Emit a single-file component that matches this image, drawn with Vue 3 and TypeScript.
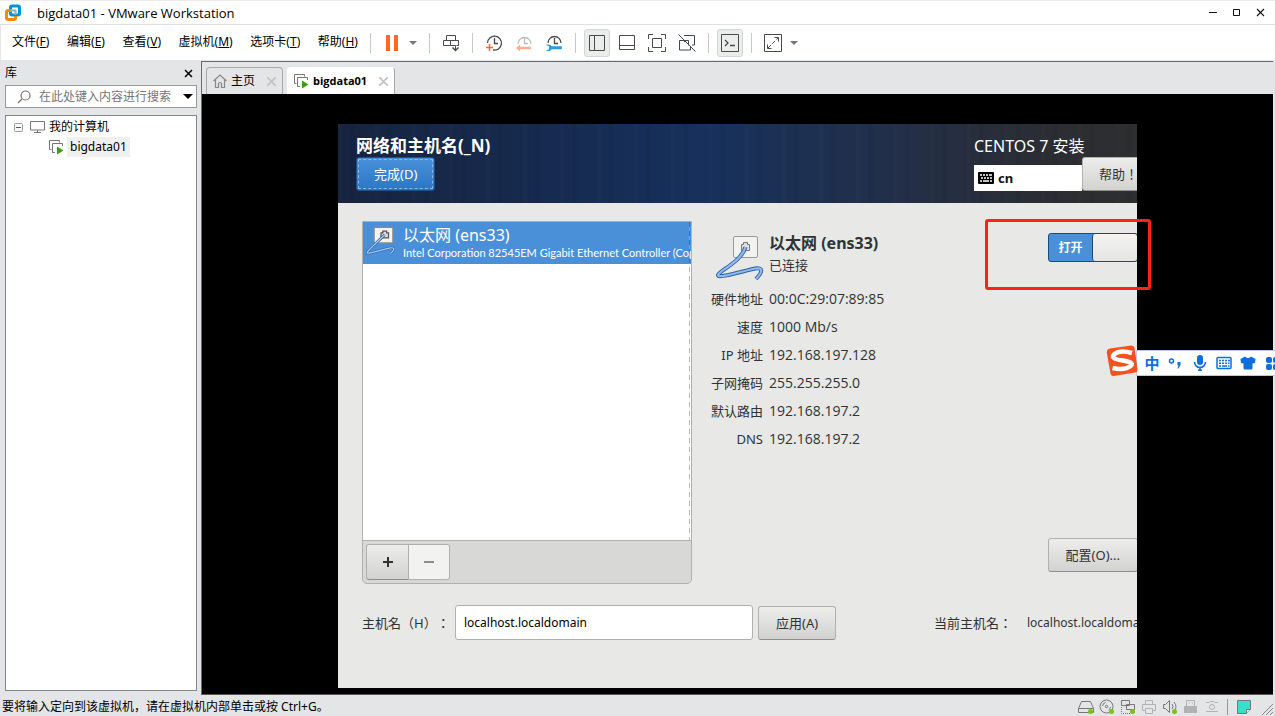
<script setup lang="ts">
import { ref } from 'vue'

interface MenuItem { label: string; key: string }
interface DetailRow { label: string; value: string }

const menus: MenuItem[] = [
  { label: '文件', key: 'F' },
  { label: '编辑', key: 'E' },
  { label: '查看', key: 'V' },
  { label: '虚拟机', key: 'M' },
  { label: '选项卡', key: 'T' },
  { label: '帮助', key: 'H' },
]

const details: DetailRow[] = [
  { label: '硬件地址', value: '00:0C:29:07:89:85' },
  { label: '速度', value: '1000 Mb/s' },
  { label: 'IP 地址', value: '192.168.197.128' },
  { label: '子网掩码', value: '255.255.255.0' },
  { label: '默认路由', value: '192.168.197.2' },
  { label: 'DNS', value: '192.168.197.2' },
]

const search = ref('')
const hostname = ref('localhost.localdomain')
const connected = ref(true)
</script>

<template>
  <div class="window">
    <header class="titlebar">
      <svg class="logo" width="18" height="18" viewBox="0 0 18 18" fill="none" stroke-width="3">
        <rect x="6.500" y="2" width="9" height="9" rx="1.500" stroke="#0095d3" />
        <path d="M8 6.500H4a1.500 1.500 0 0 0-1.500 1.500v6A1.500 1.500 0 0 0 4 15.500h6a1.500 1.500 0 0 0 1.500-1.500v-2" stroke="#f38b00" />
        <path d="M6.500 6.500h5v4.500" stroke="#7fb7c9" stroke-width="2" />
      </svg>
      <h1>bigdata01 - VMware Workstation</h1>
      <div class="win-controls">
        <button type="button" aria-label="最小化"><svg width="10" height="10" viewBox="0 0 10 10"><path d="M1 4.500h8" stroke="#111" /></svg></button>
        <button type="button" aria-label="最大化"><svg width="10" height="10" viewBox="0 0 10 10"><path d="M1.500 1.500h6v6h-6z" fill="none" stroke="#111" /></svg></button>
        <button type="button" aria-label="关闭"><svg width="10" height="10" viewBox="0 0 10 10"><path d="M1 1l7 7M8 1L1 8" stroke="#111" stroke-width="1.100" /></svg></button>
      </div>
    </header>

    <div class="menubar">
      <nav class="menus">
        <button v-for="m in menus" :key="m.key" type="button">{{ m.label }}(<u>{{ m.key }}</u>)</button>
      </nav>
      <span class="sep"></span>
      <button class="tool" type="button" aria-label="挂起"><svg width="18" height="18" viewBox="0 0 18 18"><path d="M3 1h4v16H3zM11 1h4v16h-4z" fill="#ff6a1f" /></svg></button>
      <button class="caret" type="button" aria-label="电源选项"><svg width="8" height="4" viewBox="0 0 8 4"><path d="M0 0h8L4 4z" fill="#777" /></svg></button>
      <span class="sep"></span>
      <button class="tool" type="button" aria-label="发送按键"><svg width="18" height="18" viewBox="0 0 18 18" fill="none" stroke="#4a4a4a"><path d="M4.500 6.500v-5h9v5M8.500 11.500h-7v-5h15v5h-2M4.500 6.500h9M8.500 6.500v5h5v5" /><path d="M10.500 13.500l3 3 3-3" stroke-width="1.500" /></svg></button>
      <span class="sep"></span>
      <div class="tools">
        <button class="tool" type="button" aria-label="拍摄快照"><svg width="18" height="18" viewBox="0 0 18 18" fill="none"><path d="M2.500 9a7 7 0 1 1 5.500 7M9.500 4v5.500H13" stroke="#4a4a4a" stroke-width="1.300" /><path d="M1 13.500h7M4.500 10v7" stroke="#ff6a1f" stroke-width="1.500" /></svg></button>
        <button class="tool" type="button" aria-label="恢复快照"><svg width="18" height="18" viewBox="0 0 18 18" fill="none"><path d="M3 10a6.500 6.500 0 1 1 13 0M9.500 4v5.500H13" stroke="#bbb" stroke-width="1.300" /><path d="M1 14l4-3.500v2.200h11v2.600H5v2.200z" fill="#ffb08a" /></svg></button>
        <button class="tool" type="button" aria-label="管理快照"><svg width="18" height="18" viewBox="0 0 18 18" fill="none"><path d="M3 9a6.500 6.500 0 1 1 13 0M9.500 4v5.500H13" stroke="#4a4a4a" stroke-width="1.300" /><path d="M1 11c3-1 5 0 5.500 1.200H16q1 0 1 1.500T16 15.200H6.500C6 17 3 17.500 1 16.500l3-1.200v-3z" fill="#2a9be0" /></svg></button>
      </div>
      <span class="sep"></span>
      <div class="tools">
        <button class="tool active" type="button" aria-label="显示库"><svg width="18" height="18" viewBox="0 0 18 18" fill="none" stroke="#4a4a4a"><path d="M1.500 1.500h15v15h-15zM6.500 1.500v15" /></svg></button>
        <button class="tool" type="button" aria-label="缩略图栏"><svg width="18" height="18" viewBox="0 0 18 18" fill="none" stroke="#4a4a4a"><path d="M1.500 1.500h15v14h-15zM1.500 11.500h15" /></svg></button>
        <button class="tool" type="button" aria-label="全屏"><svg width="18" height="18" viewBox="0 0 18 18" fill="none" stroke="#4a4a4a"><path d="M.5 5V.5H5M13 .5h4.500V5M17.500 13v4.500H13M5 17.500H.5V13M4.500 4.500h9v9h-9z" /></svg></button>
        <button class="tool" type="button" aria-label="Unity"><svg width="18" height="18" viewBox="0 0 18 18" fill="none" stroke="#3c4a52"><path d="M6 1.500h10.500v9.500H14M6.500 8V6.500h4v5M7 6.500H1.500v9.500h11v-3M.5.5l17 17" /></svg></button>
      </div>
      <span class="sep"></span>
      <button class="tool active" type="button" aria-label="控制台视图"><svg width="18" height="18" viewBox="0 0 18 18" fill="none" stroke="#4a4a4a"><path d="M.5.5h17v17H.5z" /><path d="M4 6l3 3-3 3M9 11.500h5" stroke-width="1.300" /></svg></button>
      <span class="sep"></span>
      <button class="tool" type="button" aria-label="自由拉伸"><svg width="18" height="18" viewBox="0 0 18 18" fill="none" stroke="#4a4a4a"><path d="M.5.5h17v17H.5zM10.500 3.500h4v4M3.500 10.500v4h4" /><path d="M4 14L14 4" stroke-dasharray="4 2" /></svg></button>
      <button class="caret" type="button" aria-label="拉伸选项"><svg width="8" height="4" viewBox="0 0 8 4"><path d="M0 0h8L4 4z" fill="#777" /></svg></button>
    </div>

    <div class="workspace">
      <aside class="library">
        <div class="lib-head">
          <h2>库</h2>
          <button type="button" aria-label="关闭库"><svg width="9" height="9" viewBox="0 0 9 9"><path d="M1 1l7 7M8 1L1 8" stroke="#000" stroke-width="1.500" /></svg></button>
        </div>
        <div class="search">
          <svg width="14" height="14" viewBox="0 0 14 14" fill="none" stroke="#777" stroke-width="1.200"><circle cx="8.500" cy="5.500" r="4.500" /><path d="M5 9l-4 4" /></svg>
          <input v-model="search" type="text" aria-label="搜索" placeholder="在此处键入内容进行搜索" />
          <button type="button" aria-label="搜索选项"><svg width="10" height="5" viewBox="0 0 10 5"><path d="M0 0h10L5 5z" /></svg></button>
        </div>
        <div class="tree">
          <div class="node">
            <svg width="9" height="9" viewBox="0 0 9 9"><rect x=".5" y=".5" width="8" height="8" rx="1" fill="#f8f8f8" stroke="#999" /><path d="M2 4.500h5" stroke="#3b57a5" /></svg>
            <svg class="pc" width="15" height="12" viewBox="0 0 15 12" fill="none" stroke="#777"><path d="M.5.500h14v8.500H.500zM7.500 9v2M4 11.500h7" /></svg>
            <button type="button">我的计算机</button>
          </div>
          <div class="node child">
            <svg width="15" height="15" viewBox="0 0 15 15" fill="none" stroke="#777"><path d="M2.500 9.500h-2v-9h10v2M6 12.500H3.500v-9h10V6" /><path d="M8 6.500l6.500 4-6.500 4z" fill="#3f9c14" stroke="none" /></svg>
            <button class="current" type="button">bigdata01</button>
          </div>
        </div>
      </aside>

      <main class="console">
        <div class="tabs">
          <div class="tab">
            <svg width="14" height="14" viewBox="0 0 14 14" fill="none" stroke="#888" stroke-width="1.200"><path d="M.5 7L7 1l6.500 6M2.500 6v7.500h3V9.500q1.500-2 3 0v4h3V6" /></svg>
            <button class="name" type="button">主页</button>
            <button class="close" type="button" aria-label="关闭主页"><svg width="9" height="9" viewBox="0 0 9 9"><path d="M0 0l9 9M9 0L0 9" stroke="#c4c4c4" stroke-width="1.800" /></svg></button>
          </div>
          <div class="tab selected">
            <svg width="15" height="15" viewBox="0 0 15 15" fill="none" stroke="#777"><path d="M2.500 9.500h-2v-9h10v2M6 12.500H3.500v-9h10V6" /><path d="M8 6.500l6.500 4-6.500 4z" fill="#3f9c14" stroke="none" /></svg>
            <button class="name" type="button">bigdata01</button>
            <button class="close" type="button" aria-label="关闭 bigdata01"><svg width="9" height="9" viewBox="0 0 9 9"><path d="M0 0l9 9M9 0L0 9" stroke="#c4c4c4" stroke-width="1.800" /></svg></button>
          </div>
        </div>

        <div class="screen">
          <section class="guest">
            <div class="guest-inner">
              <div class="banner">
                <div class="banner-left">
                  <h2>网络和主机名(_N)</h2>
                  <button class="done" type="button">完成(D)</button>
                </div>
                <div class="banner-right">
                  <p>CENTOS 7 安装</p>
                  <div class="banner-tools">
                    <button class="layout" type="button">
                      <svg width="16" height="12" viewBox="0 0 16 12"><rect width="16" height="12" rx="1" /><path d="M2 3h2M5 3h2M8 3h2M11 3h3M3 6h2M6 6h2M9 6h2M12 6h2M2 9h2M5 9h6M12 9h2" stroke="#fff" stroke-width="1.600" /></svg>
                      cn
                    </button>
                    <button class="gtk help centered-marks" type="button">帮助！</button>
                  </div>
                </div>
              </div>

              <div class="net">
                <div class="devices">
                  <div class="device-list">
                    <button class="device" type="button">
                      <svg width="30" height="30" viewBox="0 0 48 46" fill="none">
                        <rect x="13" y="1" width="30" height="25" rx="1" fill="#f2f2f0" stroke="#8a8a86" stroke-width="2" />
                        <path d="M24 18v-8h3V7h6v3h3v8z" fill="#ddd" stroke="#555" stroke-width="2" />
                        <path d="M30 13C20 23 5 36 2 41S24 37 39 34Q50 33 39 43" stroke="#2f60a5" stroke-width="4" />
                        <path d="M30 13C20 23 5 36 2 41S24 37 39 34Q50 33 39 43" stroke="#a5c8f2" stroke-width="2" />
                      </svg>
                      <span class="device-text">
                        <strong>以太网 (ens33)</strong>
                        <small>Intel Corporation 82545EM Gigabit Ethernet Controller (Copper)</small>
                      </span>
                    </button>
                  </div>
                  <div class="device-tools">
                    <button class="gtk" type="button" aria-label="添加"><svg width="10" height="10" viewBox="0 0 10 10"><path d="M0 5h10M5 0v10" stroke="#2e3436" stroke-width="2" /></svg></button>
                    <button class="gtk" type="button" aria-label="移除" disabled><svg width="10" height="10" viewBox="0 0 10 10"><path d="M0 5h10" stroke="#8b8e8f" stroke-width="2" /></svg></button>
                  </div>
                </div>

                <div class="info">
                  <div class="info-head">
                    <svg width="48" height="46" viewBox="0 0 48 46" fill="none">
                      <rect x="17.500" y=".500" width="24" height="21" rx="1.500" fill="#f2f2f0" stroke="#9a9a96" />
                      <path d="M25.500 14.500v-6h2V6.500h4v2h2v6z" fill="#e0e0de" stroke="#777" />
                      <path d="M29.500 11C26 25 3 35 2 39S24 36 39 32.500Q51 31 40 43" stroke="#2f60a5" stroke-width="4" />
                      <path d="M29.500 11C26 25 3 35 2 39S24 36 39 32.500Q51 31 40 43" stroke="#8fb9ec" stroke-width="2.200" />
                    </svg>
                    <div class="info-title">
                      <h3>以太网 (ens33)</h3>
                      <p>已连接</p>
                    </div>
                    <label class="switch">
                      <input v-model="connected" type="checkbox" role="switch" />
                      <span class="on">打开</span>
                      <span class="knob"></span>
                    </label>
                  </div>
                  <dl>
                    <template v-for="row in details" :key="row.label">
                      <dt>{{ row.label }}</dt>
                      <dd>{{ row.value }}</dd>
                    </template>
                  </dl>
                  <button class="gtk configure" type="button">配置(O)...</button>
                </div>
              </div>

              <div class="host">
                <label class="centered-marks" for="hostname">主机名（H）：</label>
                <input id="hostname" v-model="hostname" type="text" />
                <button class="gtk apply" type="button">应用(A)</button>
                <p class="host-now"><span class="centered-marks">当前主机名：</span><span class="host-value">localhost.localdomain</span></p>
              </div>
            </div>
          </section>
        </div>
      </main>
    </div>

    <footer class="status">
      <p>要将输入定向到该虚拟机，请在虚拟机内部单击或按 Ctrl+G。</p>
      <div class="devices-bar">
        <svg viewBox="0 0 16 16" fill="none" stroke="#777"><path d="M3.500 2.500h9l3 7v4H.5v-4zM.5 9.500h15" /><circle cx="12.500" cy="12.500" r="2.500" fill="#7ac21a" stroke="none" /></svg>
        <svg viewBox="0 0 16 16" fill="none" stroke="#777"><circle cx="7.500" cy="7.500" r="6.500" /><circle cx="7.500" cy="7.500" r="1.200" /><path d="M3.500 7a4 4 0 0 1 3-3.500M11.500 8a4 4 0 0 1-2 3" /><circle cx="12.500" cy="12.500" r="2.500" fill="#7ac21a" stroke="none" /></svg>
        <svg viewBox="0 0 16 16" fill="none" stroke="#777"><path d="M1.500 1.500h8v5h-8zM6.500 5.500h8v5h-8z" fill="#e4e5e7" /><path d="M1.500 8v6.500H11" stroke-dasharray="1 1" /><circle cx="12.500" cy="12.500" r="2.500" fill="#7ac21a" stroke="none" /></svg>
        <svg viewBox="0 0 16 16" fill="none" stroke="#b2b2b2"><path d="M4.500 5.500v-4h7v4M4.500 11.500h-3v-6h13v6h-3M4.500 9.500h7v5h-7z" /></svg>
        <svg viewBox="0 0 16 16" fill="none" stroke="#777"><path d="M1.500 5.500h2l4-4v12l-4-4h-2zM10 5q2 2.500 0 5M12 3q4 5 0 9" /><circle cx="12.500" cy="12.500" r="2.500" fill="#7ac21a" stroke="none" /></svg>
        <svg viewBox="0 0 16 16" fill="none" stroke="#b2b2b2"><path d="M3.500 7V1.500h8V7" /><path d="M6 4h1M9 4h1" /><path d="M1 7h13v7H1z" fill="#b2b2b2" stroke="none" /></svg>
        <svg viewBox="0 0 16 16" fill="none" stroke="#b2b2b2"><path d="M2 3.500h3l1-1h4l1 1h3M2 12.500h12" /><circle cx="8" cy="8" r="2.500" /></svg>
        <span class="divider"></span>
        <svg viewBox="0 0 16 16"><path d="M1.500 1.500h13v9l-4 4h-9z" fill="#38dfca" stroke="#777" /><path d="M10.500 14.500v-4h4" fill="#d7f5f0" stroke="#777" /></svg>
        <svg class="grip" viewBox="0 0 12 12" fill="none" stroke="#888"><path d="M1 12L12 1M5 12l7-7M9 12l3-3" /></svg>
      </div>
    </footer>

    <div class="highlight"></div>

    <div class="ime">
      <svg class="sogou" width="32" height="32" viewBox="0 0 32 32">
        <path d="M4 3.500L25 .5q3-.3 3.500 2.500L31.500 24q.2 3-2.500 3.500L8 31q-3 .3-3.500-2.500L.8 7.500Q.8 4 4 3.500z" fill="#f4511e" />
        <path d="M26 8Q14 4.500 8.500 9T16.500 15.500T24 21.500T6.500 23" fill="none" stroke="#fff" stroke-width="4.500" />
      </svg>
      <div class="ime-bar">
        <button type="button" class="lang">中</button>
        <button type="button" aria-label="标点"><svg width="16" height="16" viewBox="0 0 16 16"><circle cx="3.500" cy="6" r="2" fill="none" stroke="#0b6fdc" stroke-width="1.500" /><path d="M9.500 7h3v3l-2 3.500H9.500l1-3h-1z" fill="#0b6fdc" /></svg></button>
        <button type="button" aria-label="语音"><svg width="16" height="16" viewBox="0 0 16 16" fill="none" stroke="#0b6fdc" stroke-width="1.600"><rect x="5" y="0" width="6" height="10" rx="3" fill="#0b6fdc" stroke="none" /><path d="M2.500 7a5.500 5.500 0 0 0 11 0M8 12.500V16M6 15.300h4" /></svg></button>
        <button type="button" aria-label="软键盘"><svg width="16" height="16" viewBox="0 0 16 16" fill="none" stroke="#0b6fdc" stroke-width="1.500"><rect x="1" y="2.500" width="14" height="11" rx="1" /><path d="M3 5.500h2M6 5.500h2M9 5.500h2M12 5.500h2M3 8.200h2M6 8.200h2M9 8.200h2M12 8.200h1.500M3 11h2M6 11h5M12 11h1.500" /></svg></button>
        <button type="button" aria-label="皮肤"><svg width="16" height="16" viewBox="0 0 16 16"><path d="M5 1.500q3 3 6 0l4.500 2.500-.5 4-2.500.5V13q0 1.500-1.500 1.500H5Q3.500 14.500 3.500 13V8.500L1 8 .5 4z" fill="#0b6fdc" /></svg></button>
        <button type="button" aria-label="工具箱"><svg width="16" height="16" viewBox="0 0 16 16" fill="#0b6fdc"><rect x="2" y="2" width="6" height="6" rx="2" /><rect x="9" y="2" width="6" height="6" rx="2" /><rect x="2" y="9" width="6" height="6" rx="2" /><rect x="9" y="9" width="6" height="6" rx="2" /></svg></button>
      </div>
    </div>
  </div>
</template>

<style>
html,
body {
  margin: 0;
  background: #e4e5e7;
}
</style>

<style scoped>
* {
  box-sizing: border-box;
}

h1,
h2,
h3,
p,
dl,
dd {
  margin: 0;
  font: inherit;
}

button,
input {
  margin: 0;
  padding: 0;
  border: 0;
  background: none;
  color: inherit;
  font: inherit;
}

svg {
  display: block;
  flex: none;
}

.window {
  position: relative;
  display: flex;
  flex-direction: column;
  height: 100vh;
  min-height: 560px;
  overflow: hidden;
  background: #e4e5e7;
  color: #000;
  font: 12px/16px "Noto Sans", "Noto Sans CJK SC", sans-serif;
  white-space: nowrap;
}

.titlebar {
  display: flex;
  align-items: center;
  height: 25px;
  padding: 0 9px 0 4px;
  border-top: 1px solid #ececec;
  border-bottom: 1px solid #e0e0e0;
  background: #fff;
}

.titlebar h1 {
  flex: 1;
  margin-left: 15px;
  font-family: "Open Sans", "Noto Sans", sans-serif;
  font-size: 13px;
}

.win-controls {
  display: flex;
  gap: 14px;
}

.win-controls button {
  width: 10px;
  height: 10px;
}

.menubar {
  display: flex;
  align-items: center;
  height: 35px;
  margin: 0 0 1px 1px;
  background: #fff;
}

.menus {
  display: flex;
  justify-content: space-between;
  width: 357px;
  margin-right: 4px;
  padding-left: 11px;
}

.menus button {
  padding-bottom: 2px;
}

.sep {
  width: 1px;
  height: 20px;
  margin: 0 8px;
  background: #c8c8c8;
}

.tools {
  display: flex;
  gap: 4px;
}

.tool {
  display: grid;
  place-content: center;
  width: 26px;
  height: 28px;
  border-radius: 3px;
}

.tool.active {
  border: 1px solid #d4d6d6;
  background: #ebecec;
}

.caret {
  display: grid;
  place-content: center;
  width: 16px;
  height: 28px;
}

.workspace {
  display: flex;
  flex: 1;
  min-height: 0;
}

.library {
  display: flex;
  flex-direction: column;
  width: 201px;
  padding: 0 4px 4px 5px;
}

.lib-head {
  display: flex;
  align-items: center;
  justify-content: space-between;
  height: 24px;
  padding-right: 4px;
}

.search {
  display: flex;
  align-items: center;
  height: 23px;
  margin-bottom: 7px;
  padding: 0 3px 0 11px;
  border: 1px solid #98989c;
  background: #fff;
}

.search input {
  flex: 1;
  min-width: 0;
  margin-left: 8px;
  outline: 0;
}

.search input::placeholder {
  color: #757575;
  opacity: 1;
}

.tree {
  flex: 1;
  padding: 1px 0 0 8px;
  border: 1px solid #828790;
  background: #fff;
}

.node {
  display: flex;
  align-items: center;
  height: 20px;
}

.node .pc {
  margin: 0 4px 0 7px;
}

.child {
  padding-left: 35px;
}

.child button {
  height: 20px;
  margin-left: 3px;
  padding: 0 3px;
  background: #f0f0f0;
}

.console {
  display: flex;
  flex: 1;
  flex-direction: column;
  min-width: 0;
  margin-right: 2px;
  border-top: 1px solid #6a6a6c;
  border-bottom: 1px solid #5e5558;
  border-left: 1px solid #6a6a6c;
}

.tabs {
  display: flex;
  gap: 4px;
  padding: 5px 0 0 4px;
}

.tab {
  display: flex;
  align-items: center;
  height: 27px;
  padding: 0 6px;
  border: 1px solid #a8a8aa;
  border-bottom: 0;
  border-radius: 4px 4px 0 0;
}

.tab .name {
  margin: 0 12px 0 4px;
}

.tab.selected {
  border-color: #fff #a8a8aa #fff #fff;
  background: #fff;
}

.selected .name {
  font-family: "Open Sans", "Noto Sans", sans-serif;
  font-size: 11px;
  font-weight: 700;
}

.screen {
  display: flex;
  flex: 1;
  min-height: 0;
  padding: 30px 136px 6px;
  background: #000;
}

.guest {
  display: flex;
  flex: 1;
  min-width: 0;
  overflow: hidden;
  background: #e8e8e6;
  color: #2e3436;
  font-size: 13px;
}

.guest-inner {
  display: flex;
  flex: none;
  flex-direction: column;
  width: calc(100% + 25px);
}

.centered-marks {
  font-family: "Noto Sans", "Noto Sans CJK TC", sans-serif;
  text-spacing-trim: space-all;
}

.banner {
  display: flex;
  justify-content: space-between;
  height: 79px;
  padding: 11px 7px 0 18px;
  background:
    repeating-linear-gradient(90deg, rgba(255, 255, 255, 0.01) 0 3px, transparent 5px 11px, rgba(0, 0, 0, 0.05) 13px 15px, transparent 18px 37px),
    linear-gradient(90deg, #172440 0%, #162c53 30%, #17315c 45%, #222f48 68%, #2a2d33 85%, #2e2e2e 100%);
  color: #fff;
}

.banner h2 {
  font-size: 17px;
  font-weight: 700;
  line-height: 22px;
}

.banner p {
  font-size: 16px;
  line-height: 22px;
}

.done {
  height: 34px;
  padding: 0 17px;
  border: 1px solid #1c5187;
  border-radius: 3px;
  outline: 1px dashed #8bb6e6;
  outline-offset: -3px;
  background: linear-gradient(#4a90d9, #2a76c6);
}

.banner-right {
  width: 181px;
}

.banner-tools {
  display: flex;
  align-items: flex-end;
}

.layout {
  display: flex;
  flex: 1;
  gap: 4px;
  align-items: center;
  height: 26px;
  padding: 0 4px;
  background: #fff;
  color: #111;
  font-weight: 700;
}

.gtk {
  height: 34px;
  padding: 0 17px;
  border: 1px solid #b0b0ac;
  border-bottom-color: #8f8f8c;
  border-radius: 3px;
  background: linear-gradient(#ededec, #d2d2d0);
  color: #2e3436;
}

.help {
  padding: 0 16px;
}

.net {
  display: grid;
  flex: 1;
  grid-template-columns: 330px 1fr;
  min-height: 0;
  padding: 18px 24px 0;
}

.devices {
  display: flex;
  flex-direction: column;
  min-height: 0;
  overflow: hidden;
  border: 1px solid #b0b0ad;
  border-radius: 0 0 5px 5px;
  background: #d8d8d6;
}

.device-list {
  flex: 1;
  min-height: 0;
  background: repeating-linear-gradient(#bbb 0 5px, #fff 5px 9px) right 1px top / 1px 100% no-repeat #fff;
}

.device {
  display: flex;
  gap: 7px;
  width: 100%;
  height: 42px;
  padding: 4px 0 0 3px;
  overflow: hidden;
  background: repeating-linear-gradient(#2a76c6 0 5px, #6ea9e4 5px 9px) right 1px top / 1px 100% no-repeat #4a90d9;
  color: #fff;
  text-align: left;
}

.device strong,
.device small {
  display: block;
  font-weight: 400;
}

.device strong {
  font-size: 16px;
  line-height: 19px;
}

.device small {
  font-family: Lato, "Noto Sans", sans-serif;
  font-size: 11px;
  line-height: 16px;
}

.device-tools {
  display: flex;
  height: 43px;
  padding: 3px;
  border-top: 1px solid #b0b0ad;
}

.device-tools .gtk {
  display: grid;
  place-content: center;
  width: 43px;
  height: 36px;
  padding: 0;
  border-radius: 3px 0 0 3px;
}

.device-tools .gtk:disabled {
  width: 41px;
  border-color: #b0b0ac;
  border-left: 0;
  border-radius: 0 3px 3px 0;
  background: #f2f2f1;
}

.info {
  display: flex;
  flex-direction: column;
  padding-bottom: 12px;
}

.info-head {
  display: flex;
  padding: 12px 0 0 24px;
}

.info-head > svg {
  margin-top: 3px;
}

.info-title {
  flex: 1;
  margin-left: 5px;
}

.info-title h3 {
  font-size: 16px;
  font-weight: 700;
  line-height: 20px;
}

.info-title p {
  line-height: 24px;
}

.switch {
  display: flex;
  position: relative;
  width: 90px;
  height: 29px;
  border: 1px solid #1c4a7c;
  border-radius: 3px;
  background: #4a90d9;
}

.switch input {
  position: absolute;
  inset: 0;
  opacity: 0;
}

.on {
  width: 43px;
  color: #fff;
  font-size: 12px;
  font-weight: 700;
  line-height: 27px;
  text-align: center;
}

.knob {
  flex: 1;
  border-left: 1px solid #1c4a7c;
  border-radius: 3px;
  background: linear-gradient(#f4f4f3, #e4e4e2);
}

dl {
  display: grid;
  grid-template-columns: 71px 1fr;
  column-gap: 6px;
  margin-top: 3px;
  line-height: 28px;
}

dt {
  text-align: right;
}

dd {
  font-family: "Open Sans", "Noto Sans", sans-serif;
  font-size: 14px;
}

.configure {
  align-self: flex-end;
  margin-top: auto;
}

.host {
  display: flex;
  align-items: center;
  padding: 21px 12px 48px 24px;
}

.host label {
  width: 93px;
}

.host input {
  width: 298px;
  height: 35px;
  margin-right: 5px;
  padding: 0 8px;
  border: 1px solid #b0b0ac;
  border-radius: 3px;
  background: #fff;
  color: #000;
  font-size: 12px;
}

.host-now {
  display: flex;
  width: 216px;
  margin-left: auto;
}

.host-now span:first-child {
  flex: none;
  width: 93px;
}

.host-value {
  font-size: 12px;
}

.status {
  display: flex;
  align-items: center;
  justify-content: space-between;
  height: 21px;
  padding-left: 2px;
}

.status p {
  padding-top: 3px;
}

.devices-bar {
  display: flex;
  gap: 5px;
  align-items: center;
  padding-top: 2px;
}

.devices-bar svg {
  width: 16px;
  height: 16px;
}

.divider {
  width: 1px;
  height: 16px;
  margin: 0 3px 0 2px;
  background: #999;
}

.devices-bar .grip {
  width: 12px;
  height: 12px;
  margin: 4px 2px 0 4px;
}

.highlight {
  position: absolute;
  top: 219px;
  right: 124px;
  width: 166px;
  height: 71px;
  border: 3px solid #fb2314;
  border-radius: 3px;
  pointer-events: none;
}

.ime {
  display: flex;
  position: absolute;
  top: 345px;
  right: -6px;
  align-items: center;
}

.ime-bar {
  display: flex;
  gap: 8px;
  align-items: center;
  height: 26px;
  margin: 4px 0 0 -2px;
  padding: 0 0 0 7px;
  border: 1px solid #b8cbe8;
  background: #fff;
}

.sogou {
  z-index: 1;
}

.lang {
  width: 16px;
  color: #0b6fdc;
  font-size: 15px;
  font-weight: 700;
}
</style>
